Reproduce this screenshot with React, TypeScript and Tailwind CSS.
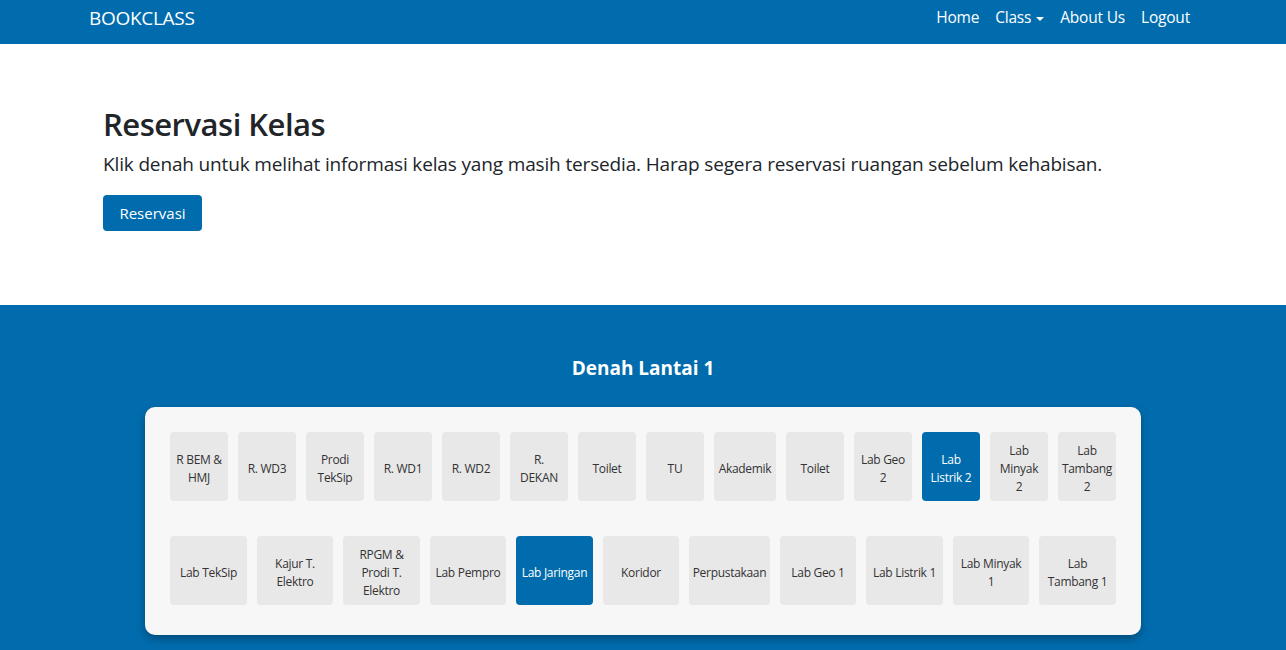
import React from "react";

// baris nama ruangan dipisah "|" agar patahnya sama dengan denah asli
const row1: [string, string][] = [
  ["R BEM &|HMJ", "w-[58px]"],
  ["R. WD3", "w-[58px]"],
  ["Prodi|TekSip", "w-[58px]"],
  ["R. WD1", "w-[58px]"],
  ["R. WD2", "w-[58px]"],
  ["R.|DEKAN", "w-[58px]"],
  ["Toilet", "w-[58px]"],
  ["TU", "w-[58px]"],
  ["Akademik", "w-[62px]"],
  ["Toilet", "w-[58px]"],
  ["Lab Geo|2", "w-[58px]"],
  ["Lab|Listrik 2", "w-[58px]"],
  ["Lab|Minyak|2", "w-[58px]"],
  ["Lab|Tambang|2", "w-[58px]"],
];

const row2: [string, string][] = [
  ["Lab TekSip", "w-[77px]"],
  ["Kajur T.|Elektro", "w-[76px]"],
  ["RPGM &|Prodi T.|Elektro", "w-[77px]"],
  ["Lab Pempro", "w-[76px]"],
  ["Lab Jaringan", "w-[77px]"],
  ["Koridor", "w-[76px]"],
  ["Perpustakaan", "w-[81px]"],
  ["Lab Geo 1", "w-[76px]"],
  ["Lab Listrik 1", "w-[77px]"],
  ["Lab Minyak|1", "w-[76px]"],
  ["Lab|Tambang 1", "w-[77px]"],
];

const active = ["Lab|Listrik 2", "Lab Jaringan"];

const Room = ({ name, width }: { name: string; width: string }) => {
  const on = active.includes(name);
  return (
    <div
      className={`${width} h-[69px] shrink-0 rounded-[4px] flex flex-col items-center justify-center text-center pt-[5px] text-[12px] leading-[18px] tracking-[-0.3px] whitespace-nowrap ${
        on ? "bg-[#006cad] text-white" : "bg-[#e9e8e9] text-[#333]"
      }`}
    >
      {name.split("|").map((l, i) => (
        <span key={i}>{l}</span>
      ))}
    </div>
  );
};

export default function App() {
  return (
    <div className="min-h-[650px] bg-[#006cad] font-['Open_Sans',sans-serif]">
      <nav className="h-[44px] bg-[#006cad] flex items-center pb-[8px]">
        <div className="w-[1116px] mx-auto flex items-center justify-between">
          <span className="pl-[4px] text-white text-[19px] tracking-[-0.3px]">BOOKCLASS</span>
          <ul className="flex items-center text-white text-[15.5px] tracking-[-0.2px]">
            <li className="px-[8px]">Home</li>
            <li className="px-[8px] flex items-center gap-[5px]">
              Class
              <span className="w-0 h-0 border-x-[4px] border-x-transparent border-t-[4px] border-t-white mt-[1px]" />
            </li>
            <li className="px-[8px]">About Us</li>
            <li className="px-[8px] pr-[11px]">Logout</li>
          </ul>
        </div>
      </nav>

      <section className="bg-white h-[261px] pl-[103px] pt-[61px]">
        <h1 className="text-[31px] leading-[38px] font-semibold text-[#212529] tracking-[-0.5px]">Reservasi Kelas</h1>
        <p className="mt-[7px] text-[19px] leading-[28px] text-[#212529] tracking-[-0.15px]">
          Klik denah untuk melihat informasi kelas yang masih tersedia. Harap segera reservasi ruangan sebelum kehabisan.
        </p>
        <button className="mt-[17px] w-[99px] h-[36px] rounded-[4px] bg-[#006cad] text-white text-[15px]">
          Reservasi
        </button>
      </section>

      <section className="pt-[50px] pb-[15px]">
        <h2 className="text-center text-white text-[19px] font-bold leading-[26px]">Denah Lantai 1</h2>
        <div className="mt-[26px] mx-auto w-[996px] bg-[#f7f7f7] rounded-[10px] shadow-[0_4px_8px_rgba(0,0,0,0.3)] pt-[25px] pb-[30px] px-[25px]">
          <div className="flex gap-[10px]">
            {row1.map(([r, w], i) => (
              <Room key={i} name={r} width={w} />
            ))}
          </div>
          <div className="flex gap-[10px] mt-[35px]">
            {row2.map(([r, w]) => (
              <Room key={r} name={r} width={w} />
            ))}
          </div>
        </div>
      </section>
    </div>
  );
}
